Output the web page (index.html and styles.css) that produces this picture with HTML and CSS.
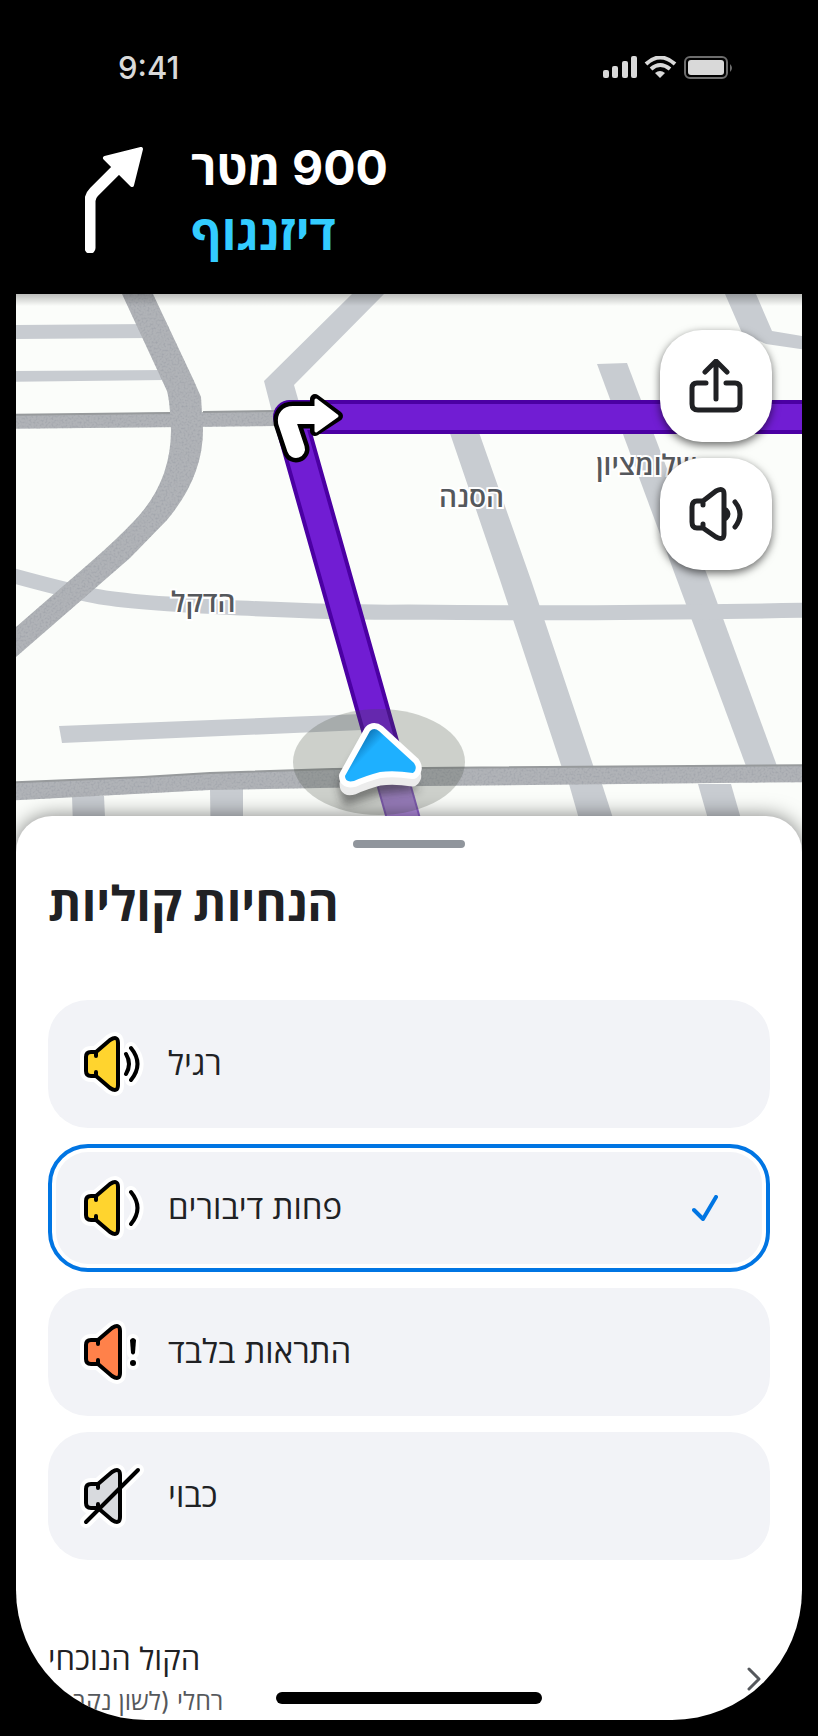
FILE: index.html
```html
<!DOCTYPE html>
<html lang="he">
<head>
  <meta charset="UTF-8" />
  <meta name="viewport" content="width=device-width, initial-scale=1.0" />
  <title>הנחיות קוליות</title>
  <link rel="stylesheet" href="styles.css">
</head>
<body>
  <div class="screen">
    <header class="topbar">
      <div class="status">
        <span class="time">9:41</span>
        <svg class="status-icons" viewBox="0 0 130 24" width="130" height="24">
          <g fill="#d9d9d9">
            <rect x="0" y="14" width="6" height="8" rx="2" />
            <rect x="9" y="10" width="6" height="12" rx="2" />
            <rect x="19" y="5" width="6" height="17" rx="2" />
            <rect x="28" y="0" width="6" height="22" rx="2" />
            <rect x="85" y="4" width="36" height="15" rx="3" />
            <path d="M127 8 Q131 12 127 16 Z" opacity="0.5" />
            <path d="M57 22 L52 17 Q57 13 62 17 Z" />
          </g>
          <g fill="none" stroke="#d9d9d9">
            <path d="M43 8 Q57 -5 72 8" stroke-width="4" />
            <path d="M48 13 Q57 5 67 13" stroke-width="4" />
            <rect x="82" y="1" width="42" height="21" rx="5" stroke-width="2" opacity="0.5" />
          </g>
        </svg>
      </div>
      <div class="direction">
        <svg class="turn" viewBox="0 0 58 106" width="58" height="106">
          <path d="M5 101 V54 Q5 49 9 45 L36 18" fill="none" stroke="#fff" stroke-width="11" stroke-linecap="round" />
          <path d="M20 11 L56 2 L47 38 Z" fill="#fff" stroke="#fff" stroke-width="4" stroke-linejoin="round" />
        </svg>
        <div class="direction-text">
          <span class="distance" dir="rtl">900 מטר</span>
          <span class="street" dir="rtl">דיזנגוף</span>
        </div>
      </div>
    </header>

    <div class="map">
      <svg class="map-canvas" viewBox="16 294 786 560" preserveAspectRatio="xMidYMin slice">
        <defs>
          <filter id="asphalt" x="0" y="0" width="1" height="1">
            <feTurbulence type="fractalNoise" baseFrequency="0.5" numOctaves="2" result="noise" />
            <feColorMatrix in="noise" type="matrix" values="0 0 0 0 0.3  0 0 0 0 0.32  0 0 0 0 0.36  1.4 0 0 0 -0.6" result="grain" />
            <feComposite in="grain" in2="SourceGraphic" operator="in" result="cut" />
            <feMerge>
              <feMergeNode in="SourceGraphic" />
              <feMergeNode in="cut" />
            </feMerge>
          </filter>
          <filter id="soft" x="-30%" y="-30%" width="160%" height="160%">
            <feGaussianBlur stdDeviation="5" />
          </filter>
          <linearGradient id="carFill" x1="0" y1="0.4" x2="0.35" y2="0.65">
            <stop offset="0.2" stop-color="#0f7cc0" />
            <stop offset="0.7" stop-color="#1eb0ff" />
          </linearGradient>
        </defs>

        <!-- side streets -->
        <g fill="#c8ccd1">
          <path d="M0 325 L150 324 V338 L0 339 Z" />
          <path d="M0 371 L165 370 V380 L0 382 Z" />
          <path d="M352 294 L264 381 L274 420 H304 L294 385 L384 294 Z" />
          <path d="M725 294 L742 333 L766 344 L820 352 V339 L772 331 L756 294 Z" />
          <path d="M597 364 L627 363 L709 580 L777 766 H746 L677 580 Z" />
          <path d="M440 404 H469 L531 580 L594 768 H562 L500 580 Z" />
          <path d="M569 784 H602 L620 840 H585 Z" />
          <path d="M698 784 H731 L747 840 H714 Z" />
          <path d="M59 726 L362 714 V730 L62 743 Z" />
          <path d="M72 796 H104 L107 860 H74 Z" />
          <path d="M210 789 H243 V860 H211 Z" />
        </g>
        <path d="M-4 571 Q60 589 95 596 T240 608 T409 612 Q600 614 820 610" fill="none" stroke="#c8ccd1" stroke-width="15" />

        <!-- main roads -->
        <g fill="#b0b3b7" filter="url(#asphalt)">
          <path d="M0 415 L280 411 V426 L0 429 Z" />
          <path d="M0 783 L143 777 L210 773 L333 769 L425 768 L820 765 V782 L425 786 L210 790 L0 801 Z" />
          <path d="M122 294 L167 391 Q170 402 171 430 Q171 482 135 520 Q116 540 93 560 L0 641 V671 L130 558 L167 520 Q203 477 203 430 L201 397 L194 381 L153 294 Z" />
        </g>
        <g fill="none" stroke="#979a9c" stroke-width="2">
          <path d="M0 415 L170 413" />
          <path d="M203 412 L276 411" />
          <path d="M0 783 L143 777 L210 773 L333 769 L425 768 L820 765" />
        </g>

        <!-- street names -->
        <g class="map-label">
          <text x="439" y="507" direction="rtl" text-anchor="end">הסנה</text>
          <text x="171" y="612" direction="rtl" text-anchor="end">הדקל</text>
          <text x="596" y="475" direction="rtl" text-anchor="end">שלומציון</text>
        </g>

        <!-- route -->
        <g fill="none" stroke-linejoin="round">
          <path d="M820 417 H290 L386 757" stroke="#4b00a3" stroke-width="34" />
          <path d="M820 417 H290 L386 757" stroke="#711dd3" stroke-width="26" />
          <path d="M386 757 L410 842" stroke="#8e5fcc" stroke-width="34" />
          <path d="M386 757 L410 842" stroke="#b28be0" stroke-width="30" />
        </g>

        <!-- next turn -->
        <g fill="none" stroke-linecap="round" stroke-linejoin="round">
          <path d="M296 449 L287 422 Q286 415 293 415 H314" stroke="#000" stroke-width="27" />
          <path d="M315 399 L338 416 L315 431 Z" stroke="#000" stroke-width="10" fill="#000" />
          <path d="M296 449 L287 422 Q286 415 293 415 H316" stroke="#fff" stroke-width="18" />
          <path d="M316 400 L337 416 L316 431 Z" stroke="#fff" stroke-width="3" fill="#fff" />
        </g>

        <!-- current position -->
        <ellipse cx="379" cy="762" rx="86" ry="53" fill="#454a40" opacity="0.25" />
        <path d="M368 740 L420 790 L380 794 L344 806 L338 784 Z" fill="#222" opacity="0.5" filter="url(#soft)" />
        <g stroke-linejoin="round">
          <path d="M370 739 Q374 735 379 739 L414 771 Q418 777 413 781 Q394 778 380 780 Q365 784 354 789 Q345 792 345 784 Z" fill="#ececec" stroke="#ececec" stroke-width="11" />
          <path d="M370 731 Q374 727 379 731 L414 763 Q418 769 413 773 Q394 770 380 772 Q365 776 354 781 Q345 783 345 776 Z" fill="#fff" stroke="#fff" stroke-width="12" />
          <path d="M370 731 Q374 727 379 731 L414 763 Q418 769 413 773 Q394 770 380 772 Q365 776 354 781 Q345 783 345 776 Z" fill="url(#carFill)" />
        </g>
      </svg>
      <div class="map-buttons">
        <button type="button" class="map-button" aria-label="שיתוף">
          <svg viewBox="0 0 54 54" width="54" height="54" fill="none" stroke="#202124" stroke-width="5" stroke-linecap="round" stroke-linejoin="round">
            <path d="M27 40 V3 M16 13 L27 2 L38 13 M17 24 H8 Q3 24 3 29 V45 Q3 51 9 51 H45 Q51 51 51 45 V29 Q51 24 46 24 H37" />
          </svg>
        </button>
        <button type="button" class="map-button" aria-label="קול">
          <svg viewBox="0 0 54 54" width="54" height="54" fill="none" stroke="#202124" stroke-width="5" stroke-linecap="round" stroke-linejoin="round">
            <path d="M14 18 V14 H8 Q3 14 3 20 V35 Q3 41 8 41 H14 V37 M14 14 L27 4 Q35 0 35 7 V47 Q35 54 27 50 L14 41" />
            <path d="M46 15 Q56 27 46 40" />
            <path d="M37 23 Q41 27 37 31 Z" fill="#202124" />
          </svg>
        </button>
      </div>
    </div>

    <main class="sheet">
      <div class="handle"></div>
      <h1 dir="rtl">הנחיות קוליות</h1>

      <div class="options" role="radiogroup" aria-label="הנחיות קוליות">
        <label class="option">
          <input type="radio" name="voice" value="normal">
          <svg class="option-icon" viewBox="-4 -4 64 64" width="64" height="64">
            <g class="halo">
              <path d="M12 16 L26 4 Q34 -1 34 7 V49 Q34 57 26 52 L12 40 H7 Q2 40 2 35 V21 Q2 16 7 16 Z" />
              <path d="M42 18 Q48 28 42 38 M47 12 Q60 28 47 44" />
            </g>
            <g class="ink">
              <path fill="#ffd42e" d="M12 16 L26 4 Q34 -1 34 7 V49 Q34 57 26 52 L12 40 H7 Q2 40 2 35 V21 Q2 16 7 16 Z" />
              <path d="M12 16 V20 M12 36 V40 M42 18 Q48 28 42 38 M47 12 Q60 28 47 44" />
            </g>
          </svg>
          <span dir="rtl">רגיל</span>
        </label>

        <label class="option">
          <input type="radio" name="voice" value="less" checked>
          <svg class="option-icon" viewBox="-4 -4 64 64" width="64" height="64">
            <g class="halo">
              <path d="M12 16 L26 4 Q34 -1 34 7 V49 Q34 57 26 52 L12 40 H7 Q2 40 2 35 V21 Q2 16 7 16 Z" />
              <path d="M47 12 Q60 28 47 44" />
            </g>
            <g class="ink">
              <path fill="#ffd42e" d="M12 16 L26 4 Q34 -1 34 7 V49 Q34 57 26 52 L12 40 H7 Q2 40 2 35 V21 Q2 16 7 16 Z" />
              <path d="M12 16 V20 M12 36 V40 M47 12 Q60 28 47 44" />
            </g>
          </svg>
          <span dir="rtl">פחות דיבורים</span>
          <svg class="check" viewBox="0 0 26 26" width="26" height="26">
            <path d="M2 15 L11 24 L24 2" />
          </svg>
        </label>

        <label class="option">
          <input type="radio" name="voice" value="alerts">
          <svg class="option-icon" viewBox="-4 -4 64 64" width="64" height="64">
            <g class="halo">
              <path d="M14 16 L28 4 Q36 -1 36 7 V49 Q36 57 28 52 L14 40 H7 Q2 40 2 35 V21 Q2 16 7 16 Z" />
              <path d="M49 16 V29 M49 39 V40" />
            </g>
            <g class="ink">
              <path fill="#ff814a" d="M14 16 L28 4 Q36 -1 36 7 V49 Q36 57 28 52 L14 40 H7 Q2 40 2 35 V21 Q2 16 7 16 Z" />
              <path d="M14 16 V20 M14 36 V40" />
            </g>
            <path d="M46 16 Q49 12 52 16 L51 29 Q49 32 47 29 Z" />
            <circle cx="49" cy="39" r="3" />
          </svg>
          <span dir="rtl">התראות בלבד</span>
        </label>

        <label class="option">
          <input type="radio" name="voice" value="off">
          <svg class="option-icon" viewBox="-4 -4 64 64" width="64" height="64">
            <g class="halo">
              <path d="M14 16 L28 4 Q36 -1 36 7 V49 Q36 57 28 52 L14 40 H7 Q2 40 2 35 V21 Q2 16 7 16 Z" />
              <path d="M2 54 L54 2" />
            </g>
            <g class="ink">
              <path fill="#d8dade" d="M14 16 L28 4 Q36 -1 36 7 V49 Q36 57 28 52 L14 40 H7 Q2 40 2 35 V21 Q2 16 7 16 Z" />
              <path d="M14 16 V20 M14 36 V40 M2 54 L54 2" />
            </g>
          </svg>
          <span dir="rtl">כבוי</span>
        </label>
      </div>

      <button type="button" class="current-voice">
        <span class="voice-text">
          <span class="voice-title" dir="rtl">הקול הנוכחי</span>
          <span class="voice-name" dir="rtl">רחלי (לשון נקבה)</span>
        </span>
        <svg viewBox="0 0 14 24" width="14" height="24" fill="none" stroke="#55585c" stroke-width="3" stroke-linecap="round" stroke-linejoin="round">
          <path d="M2 2 L12 12 L2 22" />
        </svg>
      </button>
      <div class="home-indicator"></div>
    </main>
  </div>
</body>
</html>
```

FILE: styles.css
```css
* {
  margin: 0;
  padding: 0;
  box-sizing: border-box;
}

body {
  background: #000;
  padding: 0 16px 16px;
  font-family: Inter, "Open Sans", "Noto Sans", sans-serif;
  color: #202124;
}

button {
  border: none;
  font: inherit;
  color: inherit;
  cursor: pointer;
}

svg {
  display: block;
  flex-shrink: 0;
}

.screen {
  position: relative;
  overflow: hidden;
  border-radius: 0 0 130px 130px;
}

/* header */
.topbar {
  background: #000;
  color: #fff;
  padding: 48px 69px 29px;
}

.status {
  display: flex;
  justify-content: space-between;
  align-items: center;
  height: 40px;
  padding-left: 33px;
}

.time {
  font-size: 31px;
  font-weight: 500;
  line-height: 38px;
  color: #d9d9d9;
}

.direction {
  display: flex;
  align-items: center;
  gap: 48px;
  margin-top: 47px;
}

.direction-text {
  display: flex;
  flex-direction: column;
  align-items: flex-start;
  font-size: 48px;
  font-weight: 700;
  line-height: 65px;
}

.street {
  color: #33ccff;
}

/* map */
.map {
  position: relative;
  height: 558px;
  background: #fbfdfa;
}

.map-canvas {
  width: 100%;
  height: 100%;
}

.map::after {
  content: "";
  position: absolute;
  top: 0;
  left: 0;
  right: 0;
  height: 12px;
  background: linear-gradient(rgba(0, 0, 0, 0.25), rgba(0, 0, 0, 0));
}

.map-label text {
  font-family: "Open Sans", "Noto Sans", sans-serif;
  font-size: 28px;
  font-weight: 600;
  fill: #55585c;
  stroke: #fff;
  stroke-width: 4px;
  paint-order: stroke;
}

.map-buttons {
  position: absolute;
  top: 36px;
  right: 30px;
  display: flex;
  flex-direction: column;
  gap: 16px;
}

.map-button {
  width: 112px;
  height: 112px;
  display: flex;
  align-items: center;
  justify-content: center;
  border-radius: 42px;
  background: #fff;
  box-shadow: 0 3px 8px rgba(0, 0, 0, 0.6);
}

/* bottom sheet */
.sheet {
  position: relative;
  margin-top: -36px;
  padding: 24px 32px 0;
  border-radius: 36px 36px 0 0;
  background: #fff;
  box-shadow: 0 0 20px rgba(0, 0, 0, 0.5);
}

.handle {
  width: 112px;
  height: 8px;
  margin: 0 auto;
  border-radius: 4px;
  background: #90959c;
}

h1 {
  width: fit-content;
  margin-top: 24px;
  font-size: 48px;
  font-weight: 700;
  line-height: 64px;
}

.options {
  display: flex;
  flex-direction: column;
  gap: 16px;
  margin-top: 64px;
}

.option {
  display: flex;
  align-items: center;
  gap: 24px;
  height: 128px;
  padding: 0 52px 0 32px;
  border-radius: 40px;
  background: #f2f3f7;
  font-size: 33px;
  cursor: pointer;
}

.option:has(input:checked) {
  border: 4px solid #0075e3;
  padding: 0 48px 0 28px;
  box-shadow: inset 0 0 0 4px #fff;
}

.option input {
  position: absolute;
  opacity: 0;
}

.option span {
  padding-bottom: 4px;
}

.halo {
  fill: #fff;
  stroke: #fff;
  stroke-width: 12px;
  stroke-linecap: round;
  stroke-linejoin: round;
}

.halo path + path {
  fill: none;
}

.ink {
  fill: none;
  stroke: #000;
  stroke-width: 4px;
  stroke-linecap: round;
  stroke-linejoin: round;
}

.check {
  margin-left: auto;
  fill: none;
  stroke: #0075e3;
  stroke-width: 4px;
  stroke-linecap: round;
  stroke-linejoin: round;
}

.current-voice {
  display: flex;
  justify-content: space-between;
  align-items: center;
  width: 100%;
  height: 160px;
  padding: 78px 9px 0 0;
  background: none;
}

.voice-text {
  display: flex;
  flex-direction: column;
  align-items: flex-start;
}

.voice-title {
  font-size: 31px;
  line-height: 44px;
}

.voice-name {
  font-size: 25px;
  line-height: 40px;
  color: #55585c;
}

.home-indicator {
  position: absolute;
  left: 50%;
  bottom: 16px;
  width: 266px;
  height: 12px;
  margin-left: -133px;
  border-radius: 6px;
  background: #000;
}
```
